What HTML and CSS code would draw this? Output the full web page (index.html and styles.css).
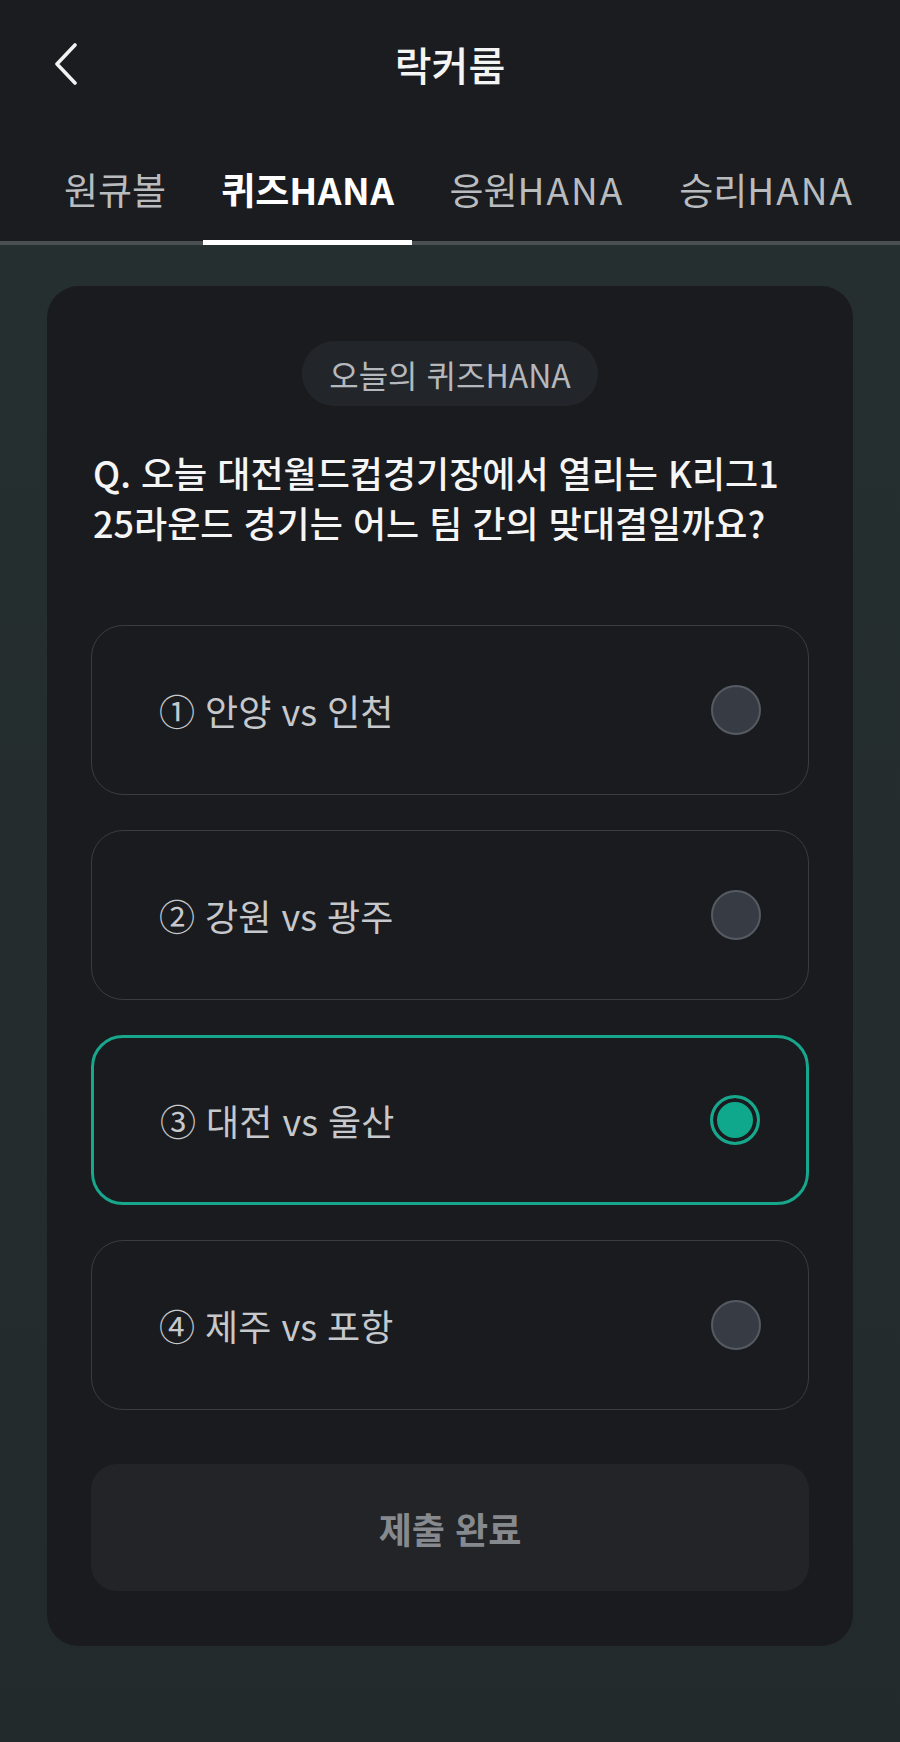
FILE: index.html
```html
<!DOCTYPE html>
<html lang="ko">
<head>
<meta charset="utf-8">
<title>락커룸</title>
<link rel="stylesheet" href="styles.css">
</head>
<body>
<header class="header">
  <div class="topbar">
    <button class="back" aria-label="뒤로">
      <svg width="26" height="42" viewBox="0 0 26 42"><path d="M22 2 L4 21 L22 40" fill="none" stroke="#f2f2f2" stroke-width="3.6" stroke-linecap="round" stroke-linejoin="round"/></svg>
    </button>
    <h1 class="title">락커룸</h1>
  </div>
  <nav class="tabs">
    <a class="tab">원큐볼</a>
    <a class="tab active">퀴즈<span class="latin">HANA</span></a>
    <a class="tab">응원<span class="latin">HANA</span></a>
    <a class="tab">승리<span class="latin">HANA</span></a>
  </nav>
</header>
<main class="main">
  <section class="card">
    <div class="chip-row"><span class="chip">오늘의 퀴즈HANA</span></div>
    <p class="question">Q. 오늘 대전월드컵경기장에서 열리는 K리그1<br>25라운드 경기는 어느 팀 간의 맞대결일까요?</p>
    <ul class="options">
      <li class="option"><span class="label">① 안양 vs 인천</span><span class="radio"></span></li>
      <li class="option"><span class="label">② 강원 vs 광주</span><span class="radio"></span></li>
      <li class="option selected"><span class="label">③ 대전 vs 울산</span><span class="radio"></span></li>
      <li class="option"><span class="label">④ 제주 vs 포항</span><span class="radio"></span></li>
    </ul>
    <button class="submit">제출 완료</button>
  </section>
</main>
</body>
</html>
```
FILE: styles.css
```css
* { box-sizing: border-box; }
html, body { margin: 0; padding: 0; }
body {
  width: 900px;
  min-height: 1742px;
  font-family: "Noto Sans CJK KR", "Noto Sans", sans-serif;
  background: linear-gradient(180deg, #263030 0%, #232a2b 100%);
  color: #fff;
}
.header {
  background: #1b1c1f;
  border-bottom: 4px solid #4a5051;
}
.topbar {
  height: 128px;
  position: relative;
  display: flex;
  align-items: center;
  justify-content: center;
}
.back {
  position: absolute;
  left: 53px;
  top: 43px;
  background: none;
  border: 0;
  padding: 0;
  display: flex;
}
.title {
  margin: 0;
  font-size: 40px;
  font-weight: 500;
  color: #f4f4f4;
  line-height: 1;
}
.tabs {
  display: flex;
  gap: 19px;
  padding-left: 46px;
  height: 113px;
}
.tab {
  padding: 10px 18px 0;
  font-size: 37px;
  font-weight: 400;
  color: #b9bcbf;
  display: flex;
  align-items: center;
  margin-bottom: -4px;
  border-bottom: 5px solid transparent;
  white-space: nowrap;
}
.tab .latin {
  letter-spacing: 2px;
}
.tab.active .latin {
  letter-spacing: 0.5px;
}
.tab.active {
  color: #ffffff;
  font-weight: 700;
  border-bottom-color: #ffffff;
}
.main {
  padding: 41px 47px 0;
}
.card {
  background: #1a1b1e;
  border-radius: 32px;
  padding: 55px 44px 55px;
}
.chip-row {
  display: flex;
  justify-content: center;
}
.chip {
  height: 65px;
  padding: 0 27px;
  border-radius: 33px;
  background: #22262b;
  color: #b5b8bc;
  font-size: 32px;
  display: flex;
  align-items: center;
}
.question {
  margin: 41px 0 0 2px;
  font-size: 36px;
  line-height: 50px;
  font-weight: 500;
  color: #f5f5f5;
  white-space: nowrap;
}
.options {
  list-style: none;
  margin: 78px 0 0;
  padding: 0;
  display: flex;
  flex-direction: column;
  gap: 35px;
}
.option {
  height: 170px;
  border: 1.5px solid #3a3c40;
  border-radius: 32px;
  display: flex;
  align-items: center;
  justify-content: space-between;
  padding: 0 47px 0 67px;
}
.option.selected {
  border: 3px solid #17a78c;
  padding: 0 46px 0 66px;
}
.label {
  font-size: 36px;
  color: #c6c8cb;
}
.radio {
  width: 50px;
  height: 50px;
  border-radius: 50%;
  background: #373b43;
  border: 2.5px solid #565b63;
}
.selected .radio {
  background: #10a88d;
  border: 3.5px solid #17a78c;
  box-shadow: inset 0 0 0 4px #1a1b1e;
}
.submit {
  display: flex;
  width: 100%;
  height: 127px;
  margin-top: 54px;
  border: 0;
  border-radius: 26px;
  background: #222427;
  color: #86898e;
  font-family: inherit;
  font-size: 36px;
  font-weight: 700;
  align-items: center;
  justify-content: center;
}
```
